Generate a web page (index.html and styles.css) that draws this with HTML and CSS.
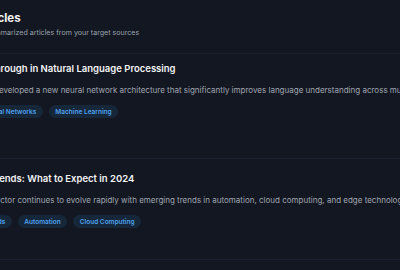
FILE: index.html
```html
<!DOCTYPE html>
<html lang="en">
<head>
<meta charset="utf-8">
<title>Articles</title>
<link rel="stylesheet" href="styles.css">
</head>
<body>
<main class="page">
  <header class="page-header">
    <h1 class="page-title">Articles</h1>
    <p class="page-subtitle">AI-summarized articles from your target sources</p>
  </header>
  <section class="article-list">
    <article class="article">
      <h2 class="article-title">Breakthrough in Natural Language Processing</h2>
      <p class="article-summary">HP has developed a new neural network architecture that significantly improves language understanding across multiple benchmarks.</p>
      <div class="tags">
        <span class="tag">Neural Networks</span>
        <span class="tag">Machine Learning</span>
      </div>
    </article>
    <article class="article">
      <h2 class="article-title">Tech Trends: What to Expect in 2024</h2>
      <p class="article-summary">The IT sector continues to evolve rapidly with emerging trends in automation, cloud computing, and edge technology.</p>
      <div class="tags">
        <span class="tag">Trends</span>
        <span class="tag">Automation</span>
        <span class="tag">Cloud Computing</span>
      </div>
    </article>
  </section>
</main>
</body>
</html>
```

FILE: styles.css
```css
html, body {
  margin: 0;
  padding: 0;
  background: #131721;
  overflow: hidden;
}
body {
  font-family: Inter, "Noto Sans", "Liberation Sans", sans-serif;
  color: #e5e7eb;
}
.page {
  width: 720px;
  margin-left: -35px;
  padding-top: 10px;
}
.page-header {
  padding-left: 11.6px;
  padding-bottom: 15px;
  border-bottom: 1px solid #1a1f2b;
}
.page-title {
  margin: 0;
  font-size: 11.5px;
  line-height: 16px;
  font-weight: 700;
  color: #f3f4f6;
}
.page-subtitle {
  margin: 2px 0 0;
  font-size: 7.1px;
  line-height: 10px;
  color: #9ca3af;
}
.article {
  padding: 13px 0 31px;
  border-bottom: 1px solid #1b2130;
}
.article:first-child {
  padding-top: 8px;
  padding-bottom: 40px;
}
.article-title {
  margin: 0;
  font-size: 9.5px;
  line-height: 14px;
  font-weight: 600;
  color: #f3f4f6;
}
.article-summary {
  margin: 8px 0 0;
  font-size: 8px;
  line-height: 12px;
  color: #a0a6b1;
  white-space: nowrap;
  overflow: hidden;
  text-overflow: ellipsis;
}
.tags {
  display: flex;
  gap: 6px;
  margin-top: 9px;
  padding-left: 12px;
}
.tag {
  display: inline-flex;
  align-items: center;
  height: 13px;
  padding: 0 6.5px;
  border-radius: 6.5px;
  background: #16273a;
  color: #4ea1ee;
  font-size: 6.5px;
  font-weight: 600;
}
```
